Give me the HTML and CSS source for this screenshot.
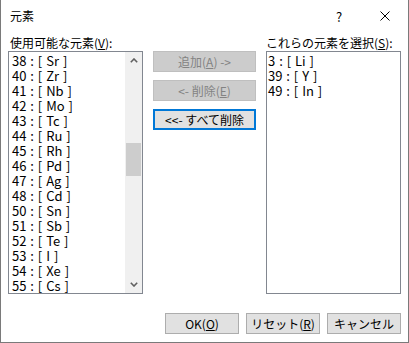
FILE: index.html
```html
<!DOCTYPE html>
<html lang="ja">
<head>
<meta charset="utf-8">
<title>元素</title>
<link rel="stylesheet" href="styles.css">
</head>
<body>
<div class="dialog">
  <div class="titlebar">
    <div class="title">元素</div>
    <div class="tbtn help">?</div>
    <div class="tbtn close">
      <svg width="10" height="10" viewBox="0 0 10 10"><path d="M0.5 0.5 L9.5 9.5 M9.5 0.5 L0.5 9.5" stroke="#000" stroke-width="1" fill="none"/></svg>
    </div>
  </div>
  <div class="content">
    <div class="panes">
      <div class="label label-left">使用可能な元素(<u>V</u>):</div>
      <div class="spacer"></div>
      <div class="label">これらの元素を選択(<u>S</u>):</div>
      <div class="listbox left">
        <div class="items">
          <div class="item">38 : [ Sr ]</div>
          <div class="item">40 : [ Zr ]</div>
          <div class="item">41 : [ Nb ]</div>
          <div class="item">42 : [ Mo ]</div>
          <div class="item">43 : [ Tc ]</div>
          <div class="item">44 : [ Ru ]</div>
          <div class="item">45 : [ Rh ]</div>
          <div class="item">46 : [ Pd ]</div>
          <div class="item">47 : [ Ag ]</div>
          <div class="item">48 : [ Cd ]</div>
          <div class="item">50 : [ Sn ]</div>
          <div class="item">51 : [ Sb ]</div>
          <div class="item">52 : [ Te ]</div>
          <div class="item">53 : [ I ]</div>
          <div class="item">54 : [ Xe ]</div>
          <div class="item">55 : [ Cs ]</div>
        </div>
        <div class="scrollbar">
          <div class="arrow">
            <svg width="8" height="5" viewBox="0 0 8 5"><path d="M0.8 4.2 L4 1 L7.2 4.2" stroke="#606060" stroke-width="1.6" fill="none"/></svg>
          </div>
          <div class="track-before"></div>
          <div class="thumb"></div>
          <div class="track-after"></div>
          <div class="arrow">
            <svg width="8" height="5" viewBox="0 0 8 5"><path d="M0.8 0.8 L4 4 L7.2 0.8" stroke="#606060" stroke-width="1.6" fill="none"/></svg>
          </div>
        </div>
      </div>
      <div class="actions">
        <div class="btn disabled">追加(<u>A</u>) -&gt;</div>
        <div class="btn disabled">&lt;- 削除(<u>E</u>)</div>
        <div class="btn focused">&lt;&lt;- すべて削除</div>
      </div>
      <div class="listbox right">
        <div class="items">
          <div class="item">3 : [ Li ]</div>
          <div class="item">39 : [ Y ]</div>
          <div class="item">49 : [ In ]</div>
        </div>
      </div>
    </div>
    <div class="footer">
      <div class="btn">OK(<u>O</u>)</div>
      <div class="btn">リセット(<u>R</u>)</div>
      <div class="btn">キャンセル</div>
    </div>
  </div>
</div>
</body>
</html>
```
FILE: styles.css
```css
html, body {
  margin: 0;
  padding: 0;
  background: #ffffff;
}

.dialog {
  width: 409px;
  height: 343px;
  box-sizing: border-box;
  border-left: 1px solid #7a7a7a;
  border-right: 1px solid #7a7a7a;
  border-bottom: 1px solid #7a7a7a;
  background: #ffffff;
  font-family: "Noto Sans CJK JP", sans-serif;
  font-size: 12px;
  color: #000;
  overflow: hidden;
}

.titlebar {
  height: 30px;
  display: flex;
  align-items: center;
}

.title {
  flex: 1;
  padding-left: 9px;
  line-height: 16px;
  padding-top: 1px;
}

.tbtn {
  width: 46px;
  height: 30px;
  display: flex;
  align-items: center;
  justify-content: center;
}

.help {
  font-size: 13px;
  padding-top: 2px;
  box-sizing: border-box;
}

.close svg {
  display: block;
  margin-top: 2px;
}

.content {
  padding: 5px 7px 0 7px;
}

.panes {
  display: grid;
  grid-template-columns: 135px 103px 135px;
  grid-template-rows: 16px 243px;
  column-gap: 10px;
}

.label {
  line-height: 16px;
  white-space: nowrap;
}

.label-left {
  padding-left: 2px;
}

.listbox {
  box-sizing: border-box;
  border: 1px solid #828790;
  background: #fff;
  display: flex;
  overflow: hidden;
}

.items {
  flex: 1;
  padding-top: 1px;
  overflow: hidden;
}

.left .items {
  padding-left: 3px;
}

.right .items {
  padding-left: 1px;
}

.item {
  height: 15px;
  line-height: 15px;
  font-size: 13px;
  white-space: nowrap;
  word-spacing: 1px;
}

.scrollbar {
  width: 17px;
  background: #f0f0f0;
  display: flex;
  flex-direction: column;
}

.arrow {
  height: 17px;
  display: flex;
  align-items: center;
  justify-content: center;
}

.arrow svg {
  display: block;
}

.track-before {
  height: 74px;
}

.thumb {
  height: 33px;
  margin: 0 1px;
  background: #cdcdcd;
}

.track-after {
  flex: 1;
}

.actions {
  display: flex;
  flex-direction: column;
  gap: 8px;
}

.btn {
  box-sizing: border-box;
  height: 21px;
  border: 1px solid #adadad;
  background: #e1e1e1;
  display: flex;
  align-items: center;
  justify-content: center;
  white-space: nowrap;
  line-height: 14px;
}

.btn.disabled {
  background: #cccccc;
  border-color: #bfbfbf;
  color: #838383;
}

.btn.focused {
  border: 2px solid #0078d7;
}

.footer {
  margin-top: 19px;
  display: flex;
  justify-content: flex-end;
  gap: 7px;
}

.footer .btn {
  width: 74px;
}
```
